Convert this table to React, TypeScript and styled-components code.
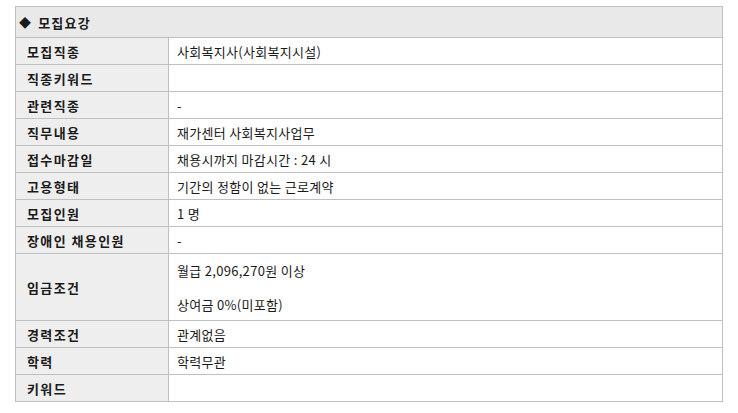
import React from 'react';
import styled, { createGlobalStyle } from 'styled-components';

const GlobalStyle = createGlobalStyle`
    html, body {
        margin: 0;
        padding: 0;
        background: #ffffff;
    }
    body {
        font-family: 'Noto Sans CJK KR', 'Noto Sans', sans-serif;
        color: #1a1a1a;
    }
`;

const Page = styled.div`
    padding: 6px 15px 0 15px;
`;

const Table = styled.table`
    width: 708px;
    border-collapse: collapse;
    table-layout: fixed;
    font-size: 13px;
    line-height: 17px;
`;

const LabelCol = styled.col`
    width: 153px;
`;

const HeaderCell = styled.th`
    height: 30px;
    padding: 0 0 0 3px;
    background: #e9e9e9;
    border: 1px solid #c0c0c0;
    text-align: left;
    font-weight: 700;
    font-size: 13px;
    letter-spacing: 1.2px;
`;

const Diamond = styled.span`
    display: inline-block;
    margin-right: 6px;
    font-size: 12px;
`;

const Label = styled.th`
    padding: 0 0 0 11px;
    background: #eeeeee;
    border: 1px solid #c0c0c0;
    text-align: left;
    font-weight: 700;
    letter-spacing: 1.4px;
`;

const Value = styled.td<{ $tall?: boolean }>`
    height: ${(p) => (p.$tall ? '66px' : '26px')};
    padding: 0 0 0 8px;
    border: 1px solid #c0c0c0;
    white-space: pre-line;
    letter-spacing: 0.3px;
`;

type Row = { label: string; value: string; tall?: boolean };

const rows: Row[] = [
    { label: '모집직종', value: '사회복지사(사회복지시설)' },
    { label: '직종키워드', value: '' },
    { label: '관련직종', value: '-' },
    { label: '직무내용', value: '재가센터 사회복지사업무' },
    { label: '접수마감일', value: '채용시까지 마감시간 : 24 시' },
    { label: '고용형태', value: '기간의 정함이 없는 근로계약' },
    { label: '모집인원', value: '1 명' },
    { label: '장애인 채용인원', value: '-' },
    { label: '임금조건', value: '월급 2,096,270원 이상\n\n상여금 0%(미포함)', tall: true },
    { label: '경력조건', value: '관계없음' },
    { label: '학력', value: '학력무관' },
    { label: '키워드', value: '' },
];

export default function App() {
    return (
        <Page>
            <GlobalStyle />
            <Table>
                <colgroup>
                    <LabelCol />
                    <col />
                </colgroup>
                <thead>
                    <tr>
                        <HeaderCell colSpan={2}>
                            <Diamond>◆</Diamond>모집요강
                        </HeaderCell>
                    </tr>
                </thead>
                <tbody>
                    {rows.map((row) => (
                        <tr key={row.label}>
                            <Label>{row.label}</Label>
                            <Value $tall={row.tall}>{row.value}</Value>
                        </tr>
                    ))}
                </tbody>
            </Table>
        </Page>
    );
}
